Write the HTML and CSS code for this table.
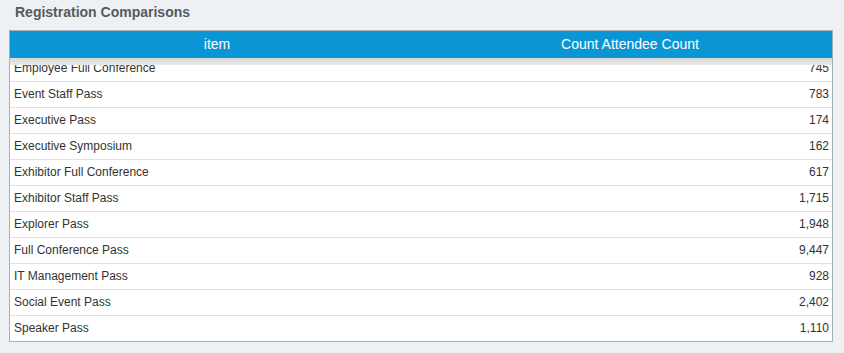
FILE: index.html
```html
<!DOCTYPE html>
<html>
<head>
<meta charset="utf-8">
<link rel="stylesheet" href="styles.css">
</head>
<body>
<div class="panel">
  <div class="title">Registration Comparisons</div>
  <div class="grid">
    <div class="head">
      <div class="hcell">item</div>
      <div class="hcell">Count Attendee Count</div>
    </div>
    <div class="band"></div>
    <div class="viewport">
      <div class="rows">
        <div class="row"><div class="c1">Employee Full Conference</div><div class="c2">745</div></div>
        <div class="row"><div class="c1">Event Staff Pass</div><div class="c2">783</div></div>
        <div class="row"><div class="c1">Executive Pass</div><div class="c2">174</div></div>
        <div class="row"><div class="c1">Executive Symposium</div><div class="c2">162</div></div>
        <div class="row"><div class="c1">Exhibitor Full Conference</div><div class="c2">617</div></div>
        <div class="row"><div class="c1">Exhibitor Staff Pass</div><div class="c2">1,715</div></div>
        <div class="row"><div class="c1">Explorer Pass</div><div class="c2">1,948</div></div>
        <div class="row"><div class="c1">Full Conference Pass</div><div class="c2">9,447</div></div>
        <div class="row"><div class="c1">IT Management Pass</div><div class="c2">928</div></div>
        <div class="row"><div class="c1">Social Event Pass</div><div class="c2">2,402</div></div>
        <div class="row"><div class="c1">Speaker Pass</div><div class="c2">1,110</div></div>
      </div>
    </div>
  </div>
</div>
</body>
</html>
```
FILE: styles.css
```css
html, body {
  margin: 0;
  padding: 0;
  background: #eef1f4;
  font-family: "Liberation Sans", Arial, sans-serif;
}
.panel {
  width: 844px;
  height: 353px;
  padding: 0 0 0 9px;
  box-sizing: border-box;
}
.title {
  height: 30px;
  box-sizing: border-box;
  padding: 4px 0 0 6px;
  font-size: 14px;
  line-height: 16px;
  font-weight: bold;
  color: #555a5f;
}
.grid {
  width: 824px;
  box-sizing: border-box;
  border: 1px solid #a9b0b7;
  background: #ffffff;
}
.head {
  display: grid;
  grid-template-columns: 1fr 1fr;
  height: 27px;
  background: #0a96d5;
}
.hcell {
  color: #ffffff;
  font-size: 14px;
  line-height: 27px;
  text-align: center;
}
.hcell:first-child {
  padding-left: 3px;
}
.hcell:last-child {
  padding-left: 7px;
}
.band {
  height: 7px;
  background: linear-gradient(#d9d9d9, #e9e9e9);
}
.viewport {
  height: 276px;
  overflow: hidden;
}
.rows {
  margin-top: -9px;
}
.row {
  display: grid;
  grid-template-columns: 1fr 1fr;
  height: 26px;
  box-sizing: border-box;
  border-bottom: 1px solid #e2e2e2;
  font-size: 12px;
  line-height: 25px;
  color: #333333;
}
.c1 {
  padding-left: 4px;
}
.c2 {
  text-align: right;
  padding-right: 3px;
}
```
